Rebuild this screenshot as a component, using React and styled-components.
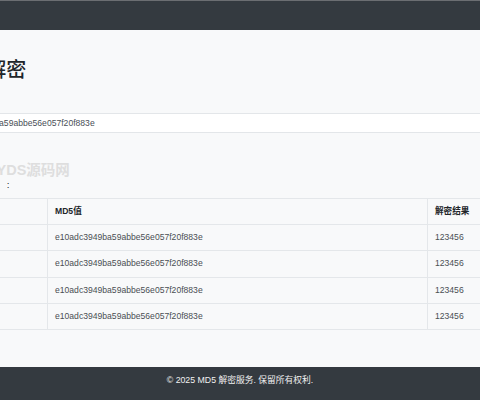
import React from "react";
import styled, { createGlobalStyle } from "styled-components";

const GlobalStyle = createGlobalStyle`
  html, body {
    margin: 0;
    padding: 0;
    background: #f8f9fa;
    overflow: hidden;
  }
  body {
    font-family: "Liberation Sans", "Noto Sans CJK SC", sans-serif;
    color: #212529;
  }
`;

const Page = styled.div`
  min-height: 100vh;
  display: flex;
  flex-direction: column;
`;

const Header = styled.header`
  height: 29px;
  background: #343a40;
  border-top: 1px solid #6b6e72;
`;

const Main = styled.main`
  flex: 1;
  display: flex;
  justify-content: center;
  padding-top: 28px;
`;

const Container = styled.div`
  width: 603px;
  flex-shrink: 0;
`;

const Title = styled.h1`
  margin: 0;
  font-size: 20px;
  font-weight: 500;
  line-height: 24px;
  color: #212529;
`;

const HashInput = styled.input`
  display: block;
  box-sizing: border-box;
  width: 100%;
  height: 20px;
  margin-top: 31px;
  padding: 0 7.5px;
  border: 1px solid #e3e6e9;
  border-radius: 2px;
  background: #fff;
  font-family: inherit;
  font-size: 8.6px;
  color: #495057;
  outline: none;
`;

const Watermark = styled.div`
  margin-top: 29px;
  font-size: 14.5px;
  font-weight: bold;
  line-height: 16px;
  color: #dedede;
`;

const Caption = styled.div`
  font-size: 9.75px;
  line-height: 13px;
  color: #212529;
`;

const Table = styled.table`
  width: 100%;
  margin-top: 6.5px;
  border-collapse: collapse;
  table-layout: fixed;
  font-size: 8.6px;
  line-height: 13px;
`;

const Cell = styled.td`
  box-sizing: border-box;
  padding: 6.2px 7px;
  border: 1px solid #e4e7ea;
  text-align: left;
  white-space: nowrap;
  color: ${(p) => (p.$head ? "#212529" : "#4a4f54")};
  font-weight: ${(p) => (p.$head ? "bold" : "normal")};
  width: ${(p) => p.$w || "auto"};
`;

const Footer = styled.footer`
  height: 33px;
  box-sizing: border-box;
  padding-top: 7px;
  background: #343a40;
  color: #f1f1f1;
  text-align: center;
  font-size: 8.75px;
  line-height: 13px;
`;

const hash = "e10adc3949ba59abbe56e057f20f883e";
const rows = [1, 2, 3, 4];

export default function App() {
  return (
    <Page>
      <GlobalStyle />
      <Header />
      <Main>
        <Container>
          <Title>MD5 解密</Title>
          <HashInput defaultValue={hash} readOnly />
          <Watermark>源码来自YDS源码网</Watermark>
          <Caption>最近解密记录　:</Caption>
          <Table>
            <thead>
              <tr>
                <Cell as="th" $head $w="108.5px">序号</Cell>
                <Cell as="th" $head>MD5值</Cell>
                <Cell as="th" $head $w="113.5px">解密结果</Cell>
              </tr>
            </thead>
            <tbody>
              {rows.map((n) => (
                <tr key={n}>
                  <Cell>{n}</Cell>
                  <Cell>{hash}</Cell>
                  <Cell>123456</Cell>
                </tr>
              ))}
            </tbody>
          </Table>
        </Container>
      </Main>
      <Footer>© 2025 MD5 解密服务. 保留所有权利.</Footer>
    </Page>
  );
}
